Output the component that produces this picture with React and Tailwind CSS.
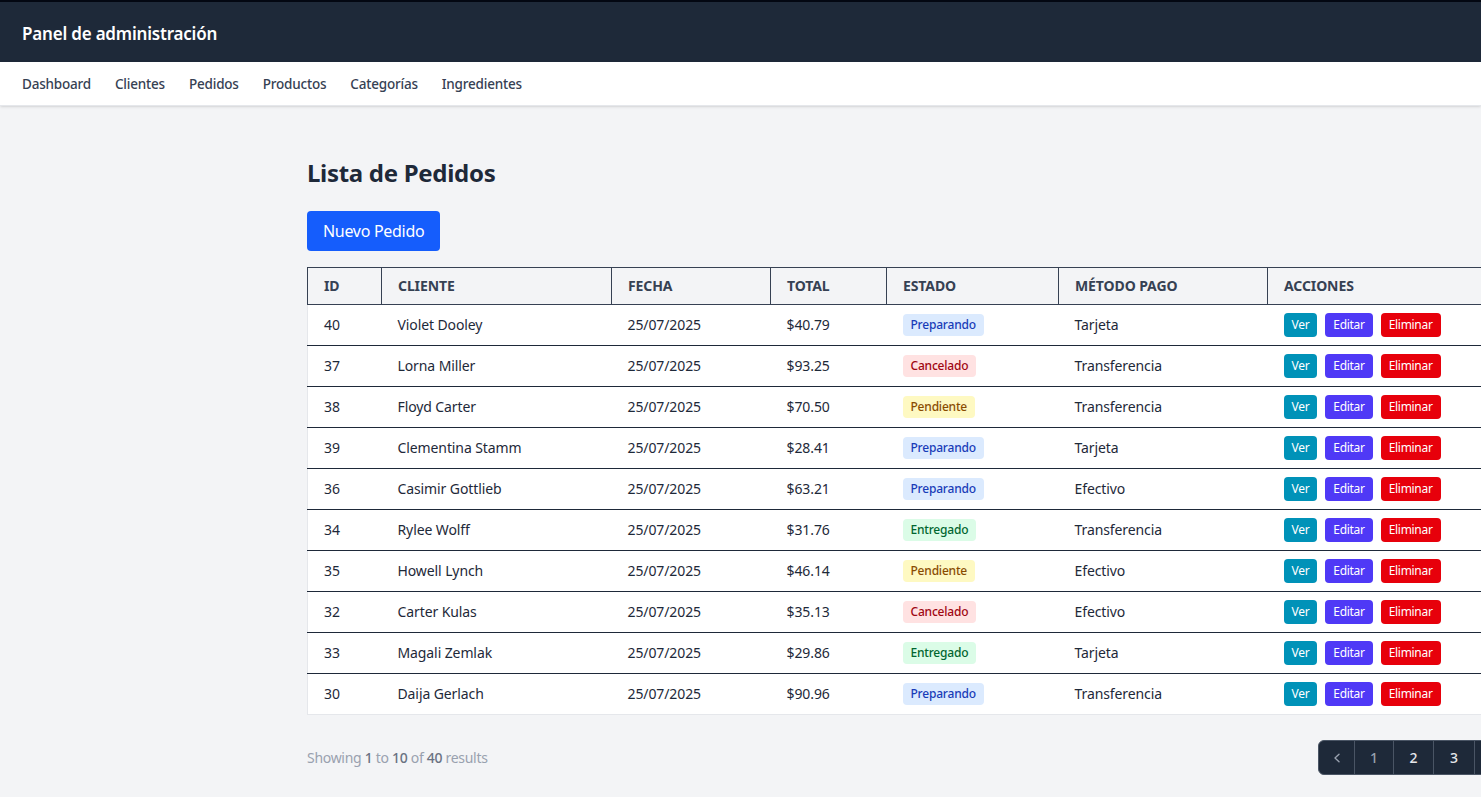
const orders = [
  { id: 40, cliente: 'Violet Dooley', total: '$40.79', estado: 'Preparando', pago: 'Tarjeta' },
  { id: 37, cliente: 'Lorna Miller', total: '$93.25', estado: 'Cancelado', pago: 'Transferencia' },
  { id: 38, cliente: 'Floyd Carter', total: '$70.50', estado: 'Pendiente', pago: 'Transferencia' },
  { id: 39, cliente: 'Clementina Stamm', total: '$28.41', estado: 'Preparando', pago: 'Tarjeta' },
  { id: 36, cliente: 'Casimir Gottlieb', total: '$63.21', estado: 'Preparando', pago: 'Efectivo' },
  { id: 34, cliente: 'Rylee Wolff', total: '$31.76', estado: 'Entregado', pago: 'Transferencia' },
  { id: 35, cliente: 'Howell Lynch', total: '$46.14', estado: 'Pendiente', pago: 'Efectivo' },
  { id: 32, cliente: 'Carter Kulas', total: '$35.13', estado: 'Cancelado', pago: 'Efectivo' },
  { id: 33, cliente: 'Magali Zemlak', total: '$29.86', estado: 'Entregado', pago: 'Tarjeta' },
  { id: 30, cliente: 'Daija Gerlach', total: '$90.96', estado: 'Preparando', pago: 'Transferencia' },
];

const badgeStyles = {
  Preparando: 'bg-blue-100 text-blue-800',
  Cancelado: 'bg-red-100 text-red-800',
  Pendiente: 'bg-yellow-100 text-yellow-800',
  Entregado: 'bg-green-100 text-green-800',
};

const navLinks = ['Dashboard', 'Clientes', 'Pedidos', 'Productos', 'Categorías', 'Ingredientes'];

const App = () => {
  return (
    <div
      className="min-h-[797px] bg-gray-100 overflow-hidden"
      style={{ fontFamily: '"Noto Sans", "Open Sans", sans-serif' }}
    >
      {/* top bar */}
      <header className="bg-gray-800 border-t-2 border-gray-950 h-[62px] flex items-center px-[22px] pt-[3px]">
        <h1 className="text-white text-[17px] font-semibold tracking-[-0.2px]">Panel de administración</h1>
      </header>
      <nav className="bg-white h-[44px] flex items-center gap-6 px-[22px] pt-[2px] shadow-sm border-b border-gray-200">
        {navLinks.map((link) => (
          <a key={link} href="#" className="text-[13.5px] font-medium text-gray-700 tracking-[-0.2px]">
            {link}
          </a>
        ))}
      </nav>

      <main className="ml-[307px] w-[1245px] pt-[51px] pb-6 tracking-[-0.1px]">
        <h2 className="text-2xl font-bold text-gray-800 mb-[22px] tracking-[-0.3px]">Lista de Pedidos</h2>
        <button className="bg-blue-600 text-white rounded px-4 h-10 mb-4 tracking-[-0.3px]">Nuevo Pedido</button>

        <table className="w-full table-fixed bg-white border border-gray-200 text-sm text-gray-800">
          <thead className="bg-gray-100 text-gray-700">
            <tr className="text-left">
              <th className="w-[74px] px-4 py-2 border border-gray-700 font-bold uppercase">ID</th>
              <th className="w-[230px] px-4 py-2 border border-gray-700 font-bold uppercase">Cliente</th>
              <th className="w-[159px] px-4 py-2 border border-gray-700 font-bold uppercase">Fecha</th>
              <th className="w-[116px] px-4 py-2 border border-gray-700 font-bold uppercase">Total</th>
              <th className="w-[172px] px-4 py-2 border border-gray-700 font-bold uppercase">Estado</th>
              <th className="w-[209px] px-4 py-2 border border-gray-700 font-bold uppercase">Método pago</th>
              <th className="px-4 py-2 border border-gray-700 font-bold uppercase">Acciones</th>
            </tr>
          </thead>
          <tbody>
            {orders.map((o, i) => (
              <tr
                key={o.id}
                className={`h-[41px] ${i === orders.length - 1 ? '' : 'border-b border-gray-800'}`}
              >
                <td className="px-4 py-2">{o.id}</td>
                <td className="px-4 py-2">{o.cliente}</td>
                <td className="px-4 py-2">25/07/2025</td>
                <td className="px-4 py-2">{o.total}</td>
                <td className="px-4 py-2">
                  <span className={`inline-block px-2 py-[3px] rounded text-xs font-medium tracking-[-0.2px] ${badgeStyles[o.estado]}`}>
                    {o.estado}
                  </span>
                </td>
                <td className="px-4 py-2">{o.pago}</td>
                <td className="px-4 py-2">
                  <div className="flex gap-2 text-xs text-white tracking-[-0.3px]">
                    <button className="bg-cyan-600 rounded px-2 h-6">Ver</button>
                    <button className="bg-indigo-600 rounded px-2 h-6">Editar</button>
                    <button className="bg-red-600 rounded px-2 h-6">Eliminar</button>
                  </div>
                </td>
              </tr>
            ))}
          </tbody>
        </table>

        <div className="flex items-center justify-between mt-[25px]">
          <p className="text-sm text-gray-400 tracking-[-0.3px]">
            Showing <span className="font-medium text-gray-500">1</span> to{' '}
            <span className="font-medium text-gray-500">10</span> of{' '}
            <span className="font-medium text-gray-500">40</span> results
          </p>
          <div className="flex h-[35px] rounded-md bg-gray-800 border border-gray-600 overflow-hidden text-sm font-medium">
            <span className="w-[36px] flex items-center justify-center text-gray-400 border-r border-gray-600">
              <svg width="18" height="18" viewBox="0 0 20 20" fill="currentColor">
                <path fillRule="evenodd" d="M12.79 5.23a.75.75 0 01-.02 1.06L8.832 10l3.938 3.71a.75.75 0 11-1.04 1.08l-4.5-4.25a.75.75 0 010-1.08l4.5-4.25a.75.75 0 011.06.02z" clipRule="evenodd" />
              </svg>
            </span>
            <span className="w-[39px] flex items-center justify-center text-gray-400 border-r border-gray-600">1</span>
            <span className="w-[40px] flex items-center justify-center text-gray-200 border-r border-gray-600">2</span>
            <span className="w-[41px] flex items-center justify-center text-gray-200 border-r border-gray-600">3</span>
            <span className="w-[40px] flex items-center justify-center text-gray-200 border-r border-gray-600">4</span>
            <span className="w-[36px] flex items-center justify-center text-gray-400">
              <svg width="18" height="18" viewBox="0 0 20 20" fill="currentColor">
                <path fillRule="evenodd" d="M7.21 14.77a.75.75 0 01.02-1.06L11.168 10 7.23 6.29a.75.75 0 111.04-1.08l4.5 4.25a.75.75 0 010 1.08l-4.5 4.25a.75.75 0 01-1.06-.02z" clipRule="evenodd" />
              </svg>
            </span>
          </div>
        </div>
      </main>
    </div>
  );
};

export default App;
